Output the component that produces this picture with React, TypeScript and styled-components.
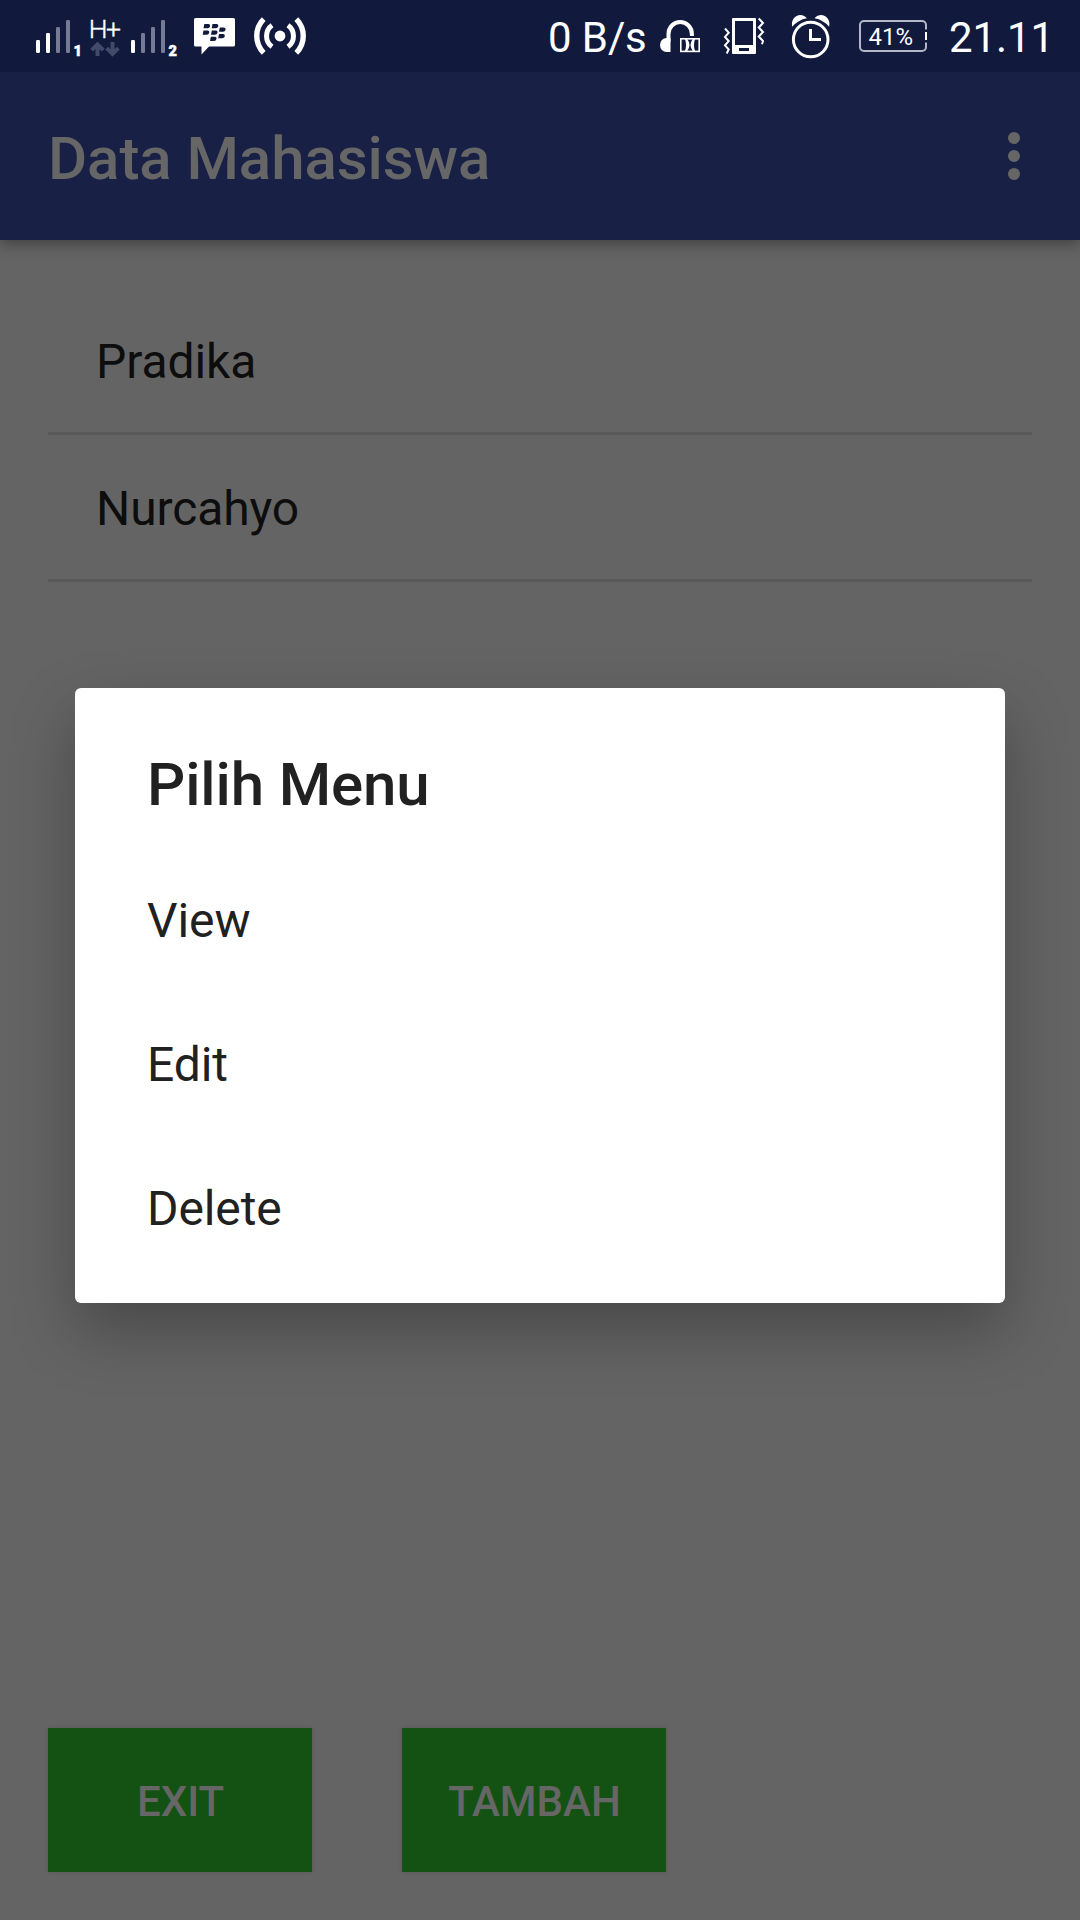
import React from "react";
import styled, { createGlobalStyle } from "styled-components";

const GlobalStyle = createGlobalStyle`
  *, *::before, *::after { box-sizing: border-box; }
  body { margin: 0; background: #646464; font-family: Roboto, "Noto Sans", sans-serif; }
`;

const Screen = styled.div`
  width: 1080px;
  height: 1920px;
  display: grid;
  grid-template-rows: 72px 168px 1fr;
  background: #646464;
  position: relative;
  overflow: hidden;
`;

const StatusBar = styled.header`
  display: flex;
  justify-content: space-between;
  padding: 0 28px 0 30px;
  background: #11193d;
  color: #fff;
  z-index: 2;
`;

const StatusGroup = styled.div`
  display: flex;
  align-items: center;
`;

const StatusIcon = styled.svg`
  display: block;
  height: 72px;
  flex: none;
  font-family: Roboto, sans-serif;
`;

const StatusText = styled.span<{ $width: number }>`
  width: ${(p) => p.$width}px;
  height: 72px;
  font-size: 42px;
  line-height: 75px;
  letter-spacing: -0.1px;
  white-space: nowrap;
`;

const AppBar = styled.div`
  display: flex;
  align-items: center;
  justify-content: space-between;
  padding: 0 60px 0 48px;
  background: #192046;
  box-shadow: 0 5px 12px rgba(0, 0, 0, 0.32);
  z-index: 1;
`;

const AppTitle = styled.h1`
  margin: 5px 0 0;
  font-size: 60px;
  line-height: 70px;
  font-weight: 500;
  letter-spacing: -0.06px;
  color: #666;
`;

const Overflow = styled.button`
  display: flex;
  flex-direction: column;
  gap: 6px;
  margin: 0;
  padding: 0;
  border: 0;
  background: none;
`;

const Dot = styled.span`
  width: 12px;
  height: 12px;
  border-radius: 50%;
  background: #666;
`;

const Content = styled.main`
  display: flex;
  flex-direction: column;
  justify-content: space-between;
  padding: 48px;
`;

const List = styled.ul`
  margin: 0;
  padding: 0;
  list-style: none;
`;

const ListRow = styled.li`
  height: 147px;
  padding-left: 48px;
  border-bottom: 3px solid #595959;
  font-size: 48px;
  line-height: 148px;
  letter-spacing: -0.1px;
  color: #0d0d0d;
`;

const Actions = styled.div`
  display: flex;
  gap: 90px;
`;

const ActionButton = styled.button`
  width: 264px;
  height: 144px;
  padding: 2px 0 0 1px;
  border: 0;
  background: #145214;
  box-shadow: 0 0 4px rgba(0, 0, 0, 0.15);
  color: #666;
  font: 500 42px Roboto, sans-serif;
`;

const Dialog = styled.section`
  position: absolute;
  left: 75px;
  top: 688px;
  width: 930px;
  height: 615px;
  padding: 61px 72px 0;
  border-radius: 6px;
  background: #fff;
  box-shadow: 0 28px 64px rgba(0, 0, 0, 0.28);
  color: #212121;
  z-index: 2;
`;

const DialogTitle = styled.h2`
  margin: 0 0 28px;
  font-size: 60px;
  line-height: 72px;
  font-weight: 500;
  letter-spacing: -0.12px;
`;

const DialogOption = styled.div`
  height: 144px;
  font-size: 48px;
  line-height: 144px;
  letter-spacing: -0.1px;
`;

const SignalIcon = ({ level, slot }: { level: number; slot: string }) => (
  <StatusIcon width={53} viewBox="0 0 53 72">
    {[40, 33, 27, 20].map((top, i) => (
      <rect key={top} x={6 + i * 10} y={top} width={4} height={53 - top} rx={1.3} fill={i < level ? "#fff" : "#767b95"} />
    ))}
    <text x={43.6} y={55.8} fontSize={14.5} fontWeight={900} fill="#fff" stroke="#fff" strokeWidth={0.5}>{slot}</text>
  </StatusIcon>
);

const NetworkIcon = () => (
  <StatusIcon width={42} viewBox="83 0 42 72">
    <text y={37.5} fontSize={26.5} fontWeight={300} fill="#fff" stroke="#fff" strokeWidth={0.4}>
      <tspan x={88.8}>H</tspan>
      <tspan x={106}>+</tspan>
    </text>
    <g fill="none" stroke="#424a69" strokeWidth={4}>
      <path d="M97.5 56V45M91.7 50.2l5.8-5.8 5.8 5.8" />
      <path d="M112.5 42v11M106.7 48.2l5.8 5.8 5.8-5.8" />
    </g>
  </StatusIcon>
);

const MessengerIcon = () => (
  <StatusIcon width={66} viewBox="178 0 66 72">
    <path fill="#fff" d="M195.5 18h38a1.5 1.5 0 0 1 1.5 1.5V45a1.5 1.5 0 0 1-1.5 1.5h-24.5l-7.5 8v-8h-6a1.5 1.5 0 0 1-1.5-1.5V19.5a1.5 1.5 0 0 1 1.5-1.5z" />
    <g fill="#11193d">
      {[[203.5, 24], [211.7, 24], [202.7, 30.5], [211, 30.5], [219, 27.6], [218.2, 34], [210, 36.8]].map(([x, y]) => (
        <path key={`${x}-${y}`} d={`M${x + 0.8} ${y}h4.4q1.8 .2 1.3 2.2q-.5 2-2.500 2H${x}z`} />
      ))}
    </g>
  </StatusIcon>
);

const HotspotIcon = () => (
  <StatusIcon width={64} viewBox="244 0 64 72">
    <circle cx={280} cy={36} r={5.4} fill="#fff" />
    <g fill="none" stroke="#fff">
      <path strokeWidth={5} d="M272 25.2a13.400 13.400 0 0 0 0 21.600M288 25.200a13.400 13.400 0 0 1 0 21.600" />
      <path strokeWidth={5.4} d="M263.700 19.200a23.800 23.800 0 0 0 0 33.600M296.300 19.200a23.800 23.800 0 0 1 0 33.600" />
    </g>
  </StatusIcon>
);

const HeadphonesIcon = () => (
  <StatusIcon width={52} viewBox="656 0 52 72">
    <path fill="none" stroke="#fff" strokeWidth={4} d="M668.5 42v-8a11.7 12 0 0 1 23.400 0v2" />
    <path fill="#fff" d="M670.5 38v14h-4a6.500 7 0 0 1 0-14z" />
    <rect x={680.8} y={38.8} width={18.4} height={12.6} fill="none" stroke="#fff" strokeWidth={1.6} />
    <path fill="#fff" d="M685 39h2.200q4.600 6 0 12H685q2-6 0-12zM695 39h-2.200q-4.600 6 0 12h2.200q-2-6 0-12z" />
  </StatusIcon>
);

const VibrateIcon = () => (
  <StatusIcon width={72} viewBox="708 0 72 72">
    <path fill="#fff" fillRule="evenodd" d="M733 18h22a1 1 0 0 1 1 1v34a1 1 0 0 1-1 1h-22a1 1 0 0 1-1-1V19a1 1 0 0 1 1-1zM735 21v24h18V21zM739 48v3h10v-3z" />
    <path fill="none" stroke="#fff" strokeWidth={2} d="M725 28.5l3.7 4.2-3.7 4.2 3.7 4.2-3.7 4.2 3.7 4.2-2 4M758.7 18.5l4.3 4.5-4.3 4.5 4.3 4.5-4.3 4.5 4.3 4.5-1 3.2" />
  </StatusIcon>
);

const AlarmIcon = () => (
  <StatusIcon width={64} viewBox="780 0 64 72">
    <g fill="none" stroke="#fff" strokeWidth={3}>
      <circle cx={810.7} cy={39.5} r={17.3} />
      <path d="M810.5 29v10.5H821" />
    </g>
    <path fill="#fff" d="M792.3 26.7c-2.5-8.5 7.5-16 14.6-8.5q-8.7 1.5-14.6 8.5zM829.1 26.7c2.5-8.5-7.5-16-14.6-8.5q8.7 1.5 14.6 8.5z" />
  </StatusIcon>
);

const BatteryIcon = () => (
  <StatusIcon width={105} viewBox="844 0 105 72">
    <path fill="none" stroke="#b4b7c6" strokeWidth={2} d="M926 29.5V25a4 4 0 0 0-4-4h-58a4 4 0 0 0-4 4v22a4 4 0 0 0 4 4h58a4 4 0 0 0 4-4v-4.5" />
    <rect x={925} y={32} width={2} height={8} fill="#fff" />
    <text x={868.5} y={45.3} fontSize={24} fill="#fff">41%</text>
  </StatusIcon>
);

const students = ["Pradika", "Nurcahyo"];
const options = ["View", "Edit", "Delete"];

export default function App() {
  return (
    <>
      <GlobalStyle />
      <Screen>
        <StatusBar>
          <StatusGroup>
            <SignalIcon level={2} slot="1" />
            <NetworkIcon />
            <SignalIcon level={1} slot="2" />
            <MessengerIcon />
            <HotspotIcon />
          </StatusGroup>
          <StatusGroup>
            <StatusText $width={108}>0 B/s</StatusText>
            <HeadphonesIcon />
            <VibrateIcon />
            <AlarmIcon />
            <BatteryIcon />
            <StatusText $width={103}>21.11</StatusText>
          </StatusGroup>
        </StatusBar>
        <AppBar>
          <AppTitle>Data Mahasiswa</AppTitle>
          <Overflow aria-label="Menu">
            <Dot />
            <Dot />
            <Dot />
          </Overflow>
        </AppBar>
        <Content>
          <List>
            {students.map((name) => (
              <ListRow key={name}>{name}</ListRow>
            ))}
          </List>
          <Actions>
            <ActionButton>EXIT</ActionButton>
            <ActionButton>TAMBAH</ActionButton>
          </Actions>
        </Content>
        <Dialog role="dialog">
          <DialogTitle>Pilih Menu</DialogTitle>
          {options.map((label) => (
            <DialogOption key={label}>{label}</DialogOption>
          ))}
        </Dialog>
      </Screen>
    </>
  );
}
